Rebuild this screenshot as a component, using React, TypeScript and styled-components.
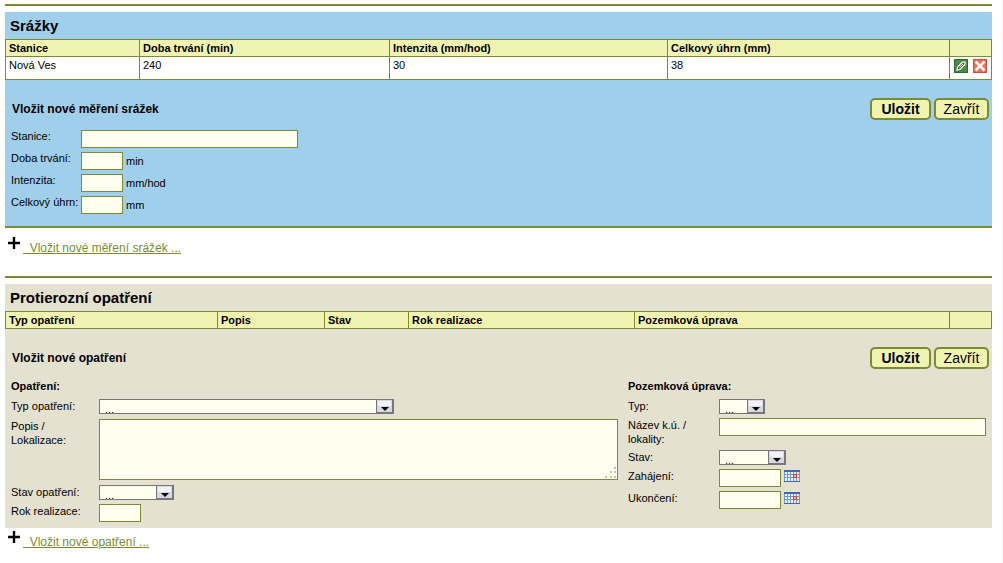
import React, { useId } from "react";
import styled, { createGlobalStyle } from "styled-components";

const olive = "#7a8c33";

const Global = createGlobalStyle`
  *, *::before, *::after { box-sizing: border-box; }
  body {
    margin: 0;
    background: #fff;
    color: #000;
    font-family: "Liberation Sans", Arial, sans-serif;
    font-size: 11px;
    line-height: 14px;
  }
  input, select, textarea, button { font-family: inherit; margin: 0; }
`;

const Page = styled.main`
  min-height: 100vh;
  padding: 4px 10px 8px 5px;
  border-right: 1px solid #f4f4f4;
`;

const Block = styled.section`
  border-top: 2px solid ${olive};
  padding-top: 6px;
`;

const Panel = styled.div<{ $bg: string; $ruled?: boolean }>`
  background: ${(p) => p.$bg};
  padding-bottom: ${(p) => (p.$ruled ? "12px" : "6px")};
  border-bottom: ${(p) => (p.$ruled ? `2px solid ${olive}` : "0")};
`;

const Heading = styled.h2`
  margin: 0;
  padding: 6px 5px 5px;
  font-size: 15px;
  line-height: 16px;
  font-weight: bold;
`;

const Grid = styled.table`
  width: 100%;
  table-layout: fixed;
  border-collapse: separate;
  border-spacing: 0;
  border-left: 1px solid ${olive};
  border-top: 1px solid ${olive};
`;

const Col = styled.col<{ $w: number }>`
  width: ${(p) => p.$w}px;
`;

const Th = styled.th`
  height: 17px;
  padding: 1px 3px;
  text-align: left;
  background: #f0f4b0;
  border-right: 1px solid ${olive};
  border-bottom: 1px solid ${olive};
`;

const Td = styled.td`
  height: 23px;
  padding: 1px 3px;
  vertical-align: top;
  background: #fff;
  border-right: 1px solid ${olive};
  border-bottom: 1px solid ${olive};
`;

const Actions = styled.div`
  display: flex;
  gap: 5px;
  padding: 1px 0 0 1px;
`;

const IconButton = styled.button`
  display: block;
  padding: 0;
  border: 0;
  background: none;
  cursor: pointer;
  svg { display: block; }
`;

const CalendarButton = styled(IconButton)`
  align-self: flex-start;
  padding-top: 1px;
`;

const TitleBar = styled.div`
  display: flex;
  justify-content: space-between;
  align-items: center;
  padding: 18px 3px 0 7px;
`;

const Title = styled.h3`
  margin: 0;
  font-size: 12px;
  line-height: 14px;
`;

const Buttons = styled.div`
  display: flex;
  gap: 3px;
`;

const Button = styled.button<{ $strong?: boolean }>`
  width: ${(p) => (p.$strong ? 61 : 55)}px;
  height: 22px;
  padding: 0;
  border: 2px solid ${olive};
  border-radius: 5px;
  background: #f0f4b0;
  color: #000;
  font-size: 14px;
  line-height: 18px;
  font-weight: ${(p) => (p.$strong ? "bold" : "normal")};
  cursor: pointer;
`;

const Form = styled.div`
  display: flex;
  flex-direction: column;
  gap: 4px;
  padding: 10px 6px 0;
  line-height: 12px;
`;

const Columns = styled.div`
  display: grid;
  grid-template-columns: minmax(0, 607fr) minmax(0, 358fr);
  gap: 10px;
  padding: 10px 6px 0;
`;

const Column = styled.div`
  display: flex;
  flex-direction: column;
`;

const SubHeading = styled.h4`
  margin: 0 0 6px;
  font-size: 11px;
  line-height: 14px;
`;

const Row = styled.div<{ $label: number; $gap?: number }>`
  display: grid;
  grid-template-columns: ${(p) => p.$label}px minmax(0, 1fr);
  align-items: start;
  margin-bottom: ${(p) => p.$gap ?? 0}px;
`;

const Label = styled.label`
  white-space: pre-line;
`;

const Control = styled.div`
  display: flex;
  align-items: center;
  gap: 3px;
`;

const Input = styled.input<{ $w?: number }>`
  width: ${(p) => (p.$w ? `${p.$w}px` : "100%")};
  height: 18px;
  padding: 1px 2px;
  border: 1px solid ${olive};
  border-radius: 0;
  background: #fffff0;
  font-size: 11px;
`;

const AreaWrap = styled.div`
  position: relative;
  height: 61px;
`;

const TextArea = styled.textarea`
  display: block;
  width: 100%;
  height: 61px;
  padding: 2px;
  border: 1px solid ${olive};
  background: #fffff0;
  font-size: 11px;
  resize: none;
`;

const Grip = styled.svg`
  position: absolute;
  right: 1px;
  bottom: 1px;
  pointer-events: none;
`;

const SelectWrap = styled.div<{ $w: number }>`
  position: relative;
  width: ${(p) => p.$w}px;
  height: 15px;
`;

const SelectBox = styled.select`
  display: block;
  width: 100%;
  height: 15px;
  padding: 3px 18px 0 5px;
  appearance: none;
  border: 1px solid #77776f;
  border-radius: 0;
  background: #fffff0;
  color: #000;
  font-size: 11px;
  line-height: 12px;
`;

const Arrow = styled.svg`
  position: absolute;
  right: 0;
  top: 0;
  pointer-events: none;
`;

const AddLine = styled.div<{ $before: number; $after?: number }>`
  display: flex;
  align-items: flex-start;
  padding: ${(p) => p.$before}px 0 0 3px;
  margin-bottom: ${(p) => p.$after ?? 0}px;
`;

const AddLink = styled.a`
  margin: 4px 0 0 3px;
  color: ${olive};
  font-size: 12px;
  line-height: 14px;
  white-space: pre;
  text-decoration: underline;
`;

function EditIcon() {
  return (
    <svg width="14" height="14" viewBox="0 0 14 14" aria-hidden="true">
      <rect x=".5" y=".5" width="13" height="13" fill="#4a8a42" stroke="#2f6b35" />
      <path d="M3 11 3.500 8 8.500 3 11 3 11 5.500 6 10.500z" fill="#3f6b45" stroke="#fff" strokeWidth="1.200" />
      <path d="M5.500 8.500 9 5" stroke="#dfeadf" />
    </svg>
  );
}

function DeleteIcon() {
  return (
    <svg width="14" height="14" viewBox="0 0 14 14" aria-hidden="true">
      <rect x=".5" y=".5" width="13" height="13" fill="#e8705c" stroke="#c94f40" />
      <path d="M2.500 2.500l9 9M11.500 2.500l-9 9" stroke="#fff8f0" strokeWidth="2.600" />
    </svg>
  );
}

function CalendarIcon() {
  return (
    <svg width="16" height="12" viewBox="0 0 16 12" aria-hidden="true">
      <rect width="16" height="12" fill="#6f98d8" />
      <rect width="16" height="2" fill="#3f66bd" />
      <rect y="11" width="16" height="1" fill="#3f66bd" />
      <rect x="9" y="4" width="4" height="4" fill="#d0453c" />
      {[2, 5, 8].map((y) =>
        [1, 4, 7, 10, 13].map((x) => (
          <rect
            key={`${x}-${y}`}
            x={x}
            y={y}
            width="2"
            height={y === 8 ? 3 : 2}
            fill={x === 10 && y === 5 ? "#f6b9a8" : x >= 10 ? "#f3e4ea" : "#f2f7ff"}
          />
        ))
      )}
    </svg>
  );
}

function PlusIcon() {
  return (
    <svg width="12" height="12" viewBox="0 0 12 12" aria-hidden="true">
      <path d="M6 0v12M0 6h12" stroke="#000" strokeWidth="2.400" />
    </svg>
  );
}

function Select({ id, width }: { id: string; width: number }) {
  return (
    <SelectWrap $w={width}>
      <SelectBox id={id}>
        <option>...</option>
      </SelectBox>
      <Arrow width="18" height="15" viewBox="0 0 18 15" aria-hidden="true">
        <rect width="18" height="15" fill="#77777a" />
        <rect x="1" y="1" width="15" height="12" fill="#d8d8e2" />
        <rect x="2" y="2" width="13" height="5" fill="#f2f2f6" />
        <path d="M5 8h8l-4 4z" fill="#000" />
      </Arrow>
    </SelectWrap>
  );
}

type FieldProps = {
  label: string;
  labelWidth: number;
  gap?: number;
  children: (id: string) => React.ReactNode;
};

function Field({ label, labelWidth, gap, children }: FieldProps) {
  const id = useId();
  return (
    <Row $label={labelWidth} $gap={gap}>
      <Label htmlFor={id}>{label}</Label>
      {children(id)}
    </Row>
  );
}

function FormTitle({ text }: { text: string }) {
  return (
    <TitleBar>
      <Title>{text}</Title>
      <Buttons>
        <Button type="button" $strong>Uložit</Button>
        <Button type="button">Zavřít</Button>
      </Buttons>
    </TitleBar>
  );
}

function AddEntry({ text, before, after }: { text: string; before: number; after?: number }) {
  return (
    <AddLine $before={before} $after={after}>
      <PlusIcon />
      <AddLink href="#">{"\u00a0 " + text}</AddLink>
    </AddLine>
  );
}

function HeaderRow({ names }: { names: string[] }) {
  return (
    <thead>
      <tr>
        {names.map((n) => (
          <Th key={n} scope="col">{n}</Th>
        ))}
        <Th as="td" />
      </tr>
    </thead>
  );
}

const rainCols = [134, 250, 278, 282, 42];
const measureCols = [212, 107, 84, 226, 315, 42];
const units = [
  ["Doba trvání:", "min"],
  ["Intenzita:", "mm/hod"],
  ["Celkový úhrn:", "mm"],
];

export default function App() {
  return (
    <>
      <Global />
      <Page>
        <Block>
          <Panel $bg="#a0cfeb" $ruled>
            <Heading>Srážky</Heading>
            <Grid>
              <colgroup>{rainCols.map((w, i) => <Col key={i} $w={w} />)}</colgroup>
              <HeaderRow names={["Stanice", "Doba trvání (min)", "Intenzita (mm/hod)", "Celkový úhrn (mm)"]} />
              <tbody>
                <tr>
                  <Td>Nová Ves</Td>
                  <Td>240</Td>
                  <Td>30</Td>
                  <Td>38</Td>
                  <Td>
                    <Actions>
                      <IconButton type="button" aria-label="Upravit"><EditIcon /></IconButton>
                      <IconButton type="button" aria-label="Smazat"><DeleteIcon /></IconButton>
                    </Actions>
                  </Td>
                </tr>
              </tbody>
            </Grid>
            <FormTitle text="Vložit nové měření srážek" />
            <Form>
              <Field label="Stanice:" labelWidth={70}>
                {(id) => <Input id={id} $w={217} />}
              </Field>
              {units.map(([label, unit]) => (
                <Field key={label} label={label} labelWidth={70}>
                  {(id) => (
                    <Control>
                      <Input id={id} $w={42} />
                      <span>{unit}</span>
                    </Control>
                  )}
                </Field>
              ))}
            </Form>
          </Panel>
        </Block>
        <AddEntry text="Vložit nové měření srážek ..." before={9} after={21} />

        <Block>
          <Panel $bg="#e4e1d0">
            <Heading>Protierozní opatření</Heading>
            <Grid>
              <colgroup>{measureCols.map((w, i) => <Col key={i} $w={w} />)}</colgroup>
              <HeaderRow names={["Typ opatření", "Popis", "Stav", "Rok realizace", "Pozemková úprava"]} />
            </Grid>
            <FormTitle text="Vložit nové opatření" />
            <Columns>
              <Column>
                <SubHeading>Opatření:</SubHeading>
                <Field label="Typ opatření:" labelWidth={88} gap={5}>
                  {(id) => <Select id={id} width={295} />}
                </Field>
                <Field label={"Popis /\nLokalizace:"} labelWidth={88} gap={5}>
                  {(id) => (
                    <AreaWrap>
                      <TextArea id={id} />
                      <Grip width="12" height="12" viewBox="0 0 12 12" aria-hidden="true">
                        <path d="M9 0h2v2h-2zM5 4h2v2h-2zM9 4h2v2h-2zM0 9h2v2h-2zM5 9h2v2h-2zM9 9h2v2h-2z" fill="#c0c0b4" />
                      </Grip>
                    </AreaWrap>
                  )}
                </Field>
                <Field label="Stav opatření:" labelWidth={88} gap={4}>
                  {(id) => <Select id={id} width={75} />}
                </Field>
                <Field label="Rok realizace:" labelWidth={88}>
                  {(id) => <Input id={id} $w={42} />}
                </Field>
              </Column>
              <Column>
                <SubHeading>Pozemková úprava:</SubHeading>
                <Field label="Typ:" labelWidth={91} gap={4}>
                  {(id) => <Select id={id} width={46} />}
                </Field>
                <Field label={"Název k.ú. /\nlokality:"} labelWidth={91} gap={4}>
                  {(id) => <Input id={id} />}
                </Field>
                <Field label="Stav:" labelWidth={91} gap={4}>
                  {(id) => <Select id={id} width={67} />}
                </Field>
                {["Zahájení:", "Ukončení:"].map((label) => (
                  <Field key={label} label={label} labelWidth={91} gap={4}>
                    {(id) => (
                      <Control>
                        <Input id={id} $w={62} />
                        <CalendarButton type="button" aria-label="Kalendář"><CalendarIcon /></CalendarButton>
                      </Control>
                    )}
                  </Field>
                ))}
              </Column>
            </Columns>
          </Panel>
        </Block>
        <AddEntry text="Vložit nové opatření ..." before={3} />
      </Page>
    </>
  );
}
